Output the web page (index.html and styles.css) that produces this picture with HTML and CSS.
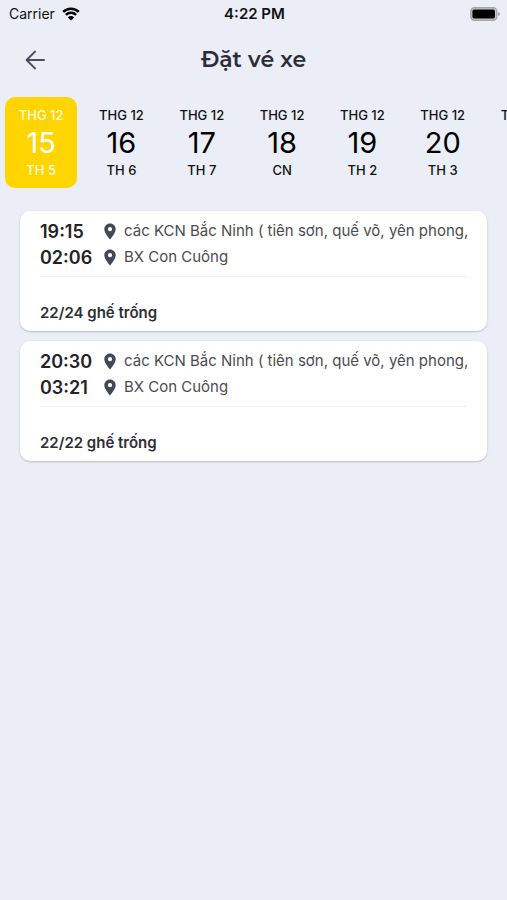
FILE: index.html
```html
<!DOCTYPE html>
<html lang="vi">
<head>
<meta charset="utf-8">
<meta name="viewport" content="width=device-width, initial-scale=1">
<title>Đặt vé xe</title>
<link rel="stylesheet" href="styles.css">
</head>
<body>
<svg class="defs" aria-hidden="true">
  <symbol id="pin" viewBox="0 0 12 17">
    <path fill-rule="evenodd" d="M6 0.5C2.8 0.5 0.3 3 0.3 6.2C0.3 10 6 16.5 6 16.5S11.7 10 11.7 6.2C11.7 3 9.2 0.5 6 0.5ZM6 4.1A2.1 2.1 0 1 1 6 8.3A2.1 2.1 0 1 1 6 4.1Z"/>
  </symbol>
</svg>
<div class="status">
  <div class="carrier">
    <span>Carrier</span>
    <svg class="wifi" viewBox="0 0 18 14" aria-hidden="true">
      <path d="M1.2 4.9A11.2 11.2 0 0 1 16.8 4.9M3.9 7.8A7.3 7.3 0 0 1 14.1 7.8" fill="none" stroke="#000" stroke-width="2.5"/>
      <path d="M9 13.6L5.8 10.4A4.5 4.5 0 0 1 12.2 10.4Z" fill="#000"/>
    </svg>
  </div>
  <span class="clock">4:22 PM</span>
  <svg class="battery" viewBox="0 0 30 14" aria-hidden="true">
    <rect x="0.8" y="0.8" width="26" height="12.4" rx="3.6" fill="#c8c9cb" stroke="#a4a5a8" stroke-width="1.4"/>
    <path d="M28 5Q30 5.5 30 7T28 9Z" fill="#a4a5a8"/>
    <rect x="2.4" y="2.5" width="22.6" height="9" rx="1.8" fill="#000"/>
  </svg>
</div>
<header class="header">
  <button class="back" type="button" aria-label="Quay lại">
    <svg viewBox="0 0 20 20" aria-hidden="true"><path d="M19 10H1.8M10 1.6L1.6 10L10 18.4"/></svg>
  </button>
  <h1>Đặt vé xe</h1>
</header>
<nav class="days">
  <button class="day selected" type="button"><span>THG 12</span><b>15</b><span>TH 5</span></button>
  <button class="day" type="button"><span>THG 12</span><b>16</b><span>TH 6</span></button>
  <button class="day" type="button"><span>THG 12</span><b>17</b><span>TH 7</span></button>
  <button class="day" type="button"><span>THG 12</span><b>18</b><span>CN</span></button>
  <button class="day" type="button"><span>THG 12</span><b>19</b><span>TH 2</span></button>
  <button class="day" type="button"><span>THG 12</span><b>20</b><span>TH 3</span></button>
  <button class="day" type="button"><span>THG 12</span></button>
</nav>
<main class="trips">
  <article class="trip">
    <div class="stop"><time>19:15</time><svg class="pin" aria-hidden="true"><use href="#pin"/></svg><span>các KCN Bắc Ninh ( tiên sơn, quế võ, yên phong,</span></div>
    <div class="stop"><time>02:06</time><svg class="pin" aria-hidden="true"><use href="#pin"/></svg><span>BX Con Cuông</span></div>
    <p class="seats">22/24 ghế trống</p>
  </article>
  <article class="trip">
    <div class="stop"><time>20:30</time><svg class="pin" aria-hidden="true"><use href="#pin"/></svg><span>các KCN Bắc Ninh ( tiên sơn, quế võ, yên phong,</span></div>
    <div class="stop"><time>03:21</time><svg class="pin" aria-hidden="true"><use href="#pin"/></svg><span>BX Con Cuông</span></div>
    <p class="seats">22/22 ghế trống</p>
  </article>
</main>
</body>
</html>
```
FILE: styles.css
```css
* { box-sizing: border-box; }

body {
  margin: 0;
  min-height: 100vh;
  background: #ebeef7;
  color: #24262b;
  font-family: Inter, "Liberation Sans", sans-serif;
  overflow-x: hidden;
}

button {
  border: 0;
  padding: 0;
  background: none;
  color: inherit;
  font: inherit;
}

.defs {
  position: absolute;
  width: 0;
  height: 0;
}

.status {
  display: grid;
  grid-template-columns: 1fr auto 1fr;
  align-items: center;
  height: 27px;
  padding: 0 7px 0 9px;
  font-size: 14px;
  color: #111;
}

.carrier {
  display: flex;
  align-items: center;
  gap: 7px;
}

.wifi { width: 18px; height: 14px; }

.clock {
  font-size: 15px;
  font-weight: 600;
}

.battery {
  justify-self: end;
  width: 30px;
  height: 14px;
}

.header {
  display: grid;
  grid-template-columns: 24px 1fr 24px;
  align-items: center;
  height: 65px;
  padding: 0 24px;
}

.back {
  display: flex;
  align-items: center;
  height: 24px;
}

.back svg {
  width: 20px;
  height: 20px;
  margin-left: 1px;
  fill: none;
  stroke: #4a4d5c;
  stroke-width: 2;
  stroke-linecap: round;
  stroke-linejoin: round;
}

h1 {
  margin: 0;
  text-align: center;
  font-family: Montserrat, Inter, sans-serif;
  font-size: 22px;
  font-weight: 600;
  line-height: 28px;
  color: #2b2d38;
}

.days {
  display: flex;
  gap: 8px;
  padding: 5px 0 0 5px;
  overflow: hidden;
}

.day {
  flex: 0 0 calc(16% - 8px);
  display: flex;
  flex-direction: column;
  align-items: center;
  padding: 9px 0;
  border-radius: 10px;
  white-space: nowrap;
  font-size: 13px;
  font-weight: 500;
  line-height: 18px;
  color: #111;
}

.day b {
  font-size: 29px;
  font-weight: 400;
  line-height: 37px;
  color: #000;
}

.day.selected {
  background: #ffd500;
  color: #fffbe0;
}

.day.selected b { color: #fff; }

.trips {
  display: flex;
  flex-direction: column;
  gap: 10px;
  padding: 23px 20px;
}

.trip {
  padding: 7px 20px 6px;
  border-radius: 10px;
  background: #fff;
  box-shadow: 0 1px 2px #b9bcc6;
}

.stop {
  display: grid;
  grid-template-columns: 64px 20px 1fr;
  align-items: center;
  height: 26px;
  font-size: 15px;
  color: #4b4c50;
}

.stop span {
  white-space: nowrap;
  line-height: 24px;
}

.stop time {
  font-size: 18px;
  font-weight: 600;
  color: #222327;
}

.pin {
  width: 12px;
  height: 17px;
  fill: #44475a;
}

.seats {
  margin: 6px 0 0;
  padding-top: 24px;
  border-top: 1px solid #eeeff2;
  font-size: 15px;
  font-weight: 600;
  line-height: 24px;
  color: #2c2e33;
}
```
